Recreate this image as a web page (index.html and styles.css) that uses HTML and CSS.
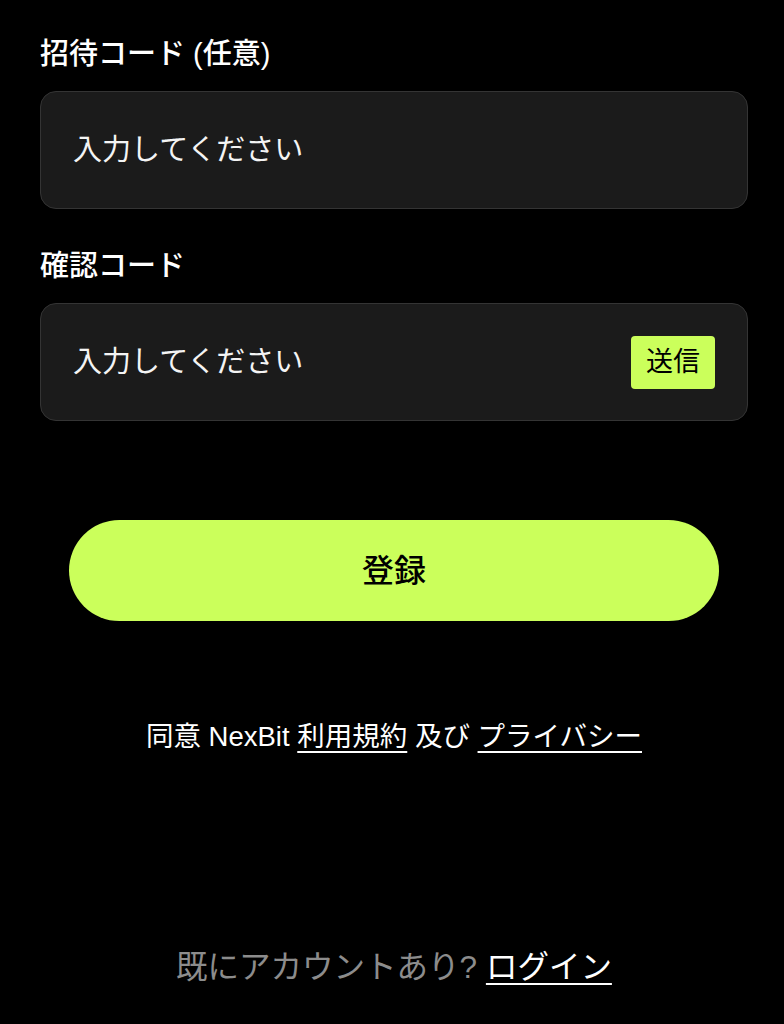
FILE: index.html
```html
<!DOCTYPE html>
<html lang="ja">
<head>
<meta charset="utf-8">
<title>登録</title>
<link rel="stylesheet" href="styles.css">
</head>
<body>
<main class="page">
  <form class="form">
    <div class="fields">
      <div class="field">
        <label class="label">招待コード (任意)</label>
        <div class="input">
          <span class="placeholder">入力してください</span>
        </div>
      </div>
      <div class="field">
        <label class="label">確認コード</label>
        <div class="input">
          <span class="placeholder">入力してください</span>
          <span class="send">送信</span>
        </div>
      </div>
    </div>
    <div class="submit-wrap">
      <button type="button" class="submit">登録</button>
    </div>
    <p class="agree">同意 NexBit <a class="link">利用規約</a> 及び <a class="link">プライバシー</a></p>
    <p class="login"><span class="muted">既にアカウントあり?</span> <a class="link">ログイン</a></p>
  </form>
</main>
</body>
</html>
```
FILE: styles.css
```css
html, body {
  margin: 0;
  padding: 0;
  background: #000;
}
body {
  font-family: "Liberation Sans", "Noto Sans CJK JP", sans-serif;
  color: #fff;
  width: 784px;
  height: 1024px;
  overflow: hidden;
}
.page {
  padding: 34px 36px 0 40px;
}
.form {
  display: flex;
  flex-direction: column;
}
.fields {
  display: flex;
  flex-direction: column;
  gap: 37px;
}
.field {
  display: flex;
  flex-direction: column;
  gap: 17px;
}
.label {
  font-size: 29px;
  line-height: 40px;
  font-weight: 500;
}
.input {
  box-sizing: border-box;
  height: 118px;
  border: 1px solid #343434;
  border-radius: 16px;
  background: #1b1b1b;
  display: flex;
  align-items: center;
  justify-content: space-between;
  padding: 0 32px;
}
.placeholder {
  font-size: 29px;
  line-height: 40px;
  color: #f4f4f4;
}
.send {
  background: #cbff5b;
  color: #000;
  font-size: 27px;
  line-height: 53px;
  padding: 0 15px;
  border-radius: 4px;
}
.submit-wrap {
  padding: 99px 29px 0;
}
.submit {
  display: block;
  width: 100%;
  height: 101px;
  padding: 0 0 6px;
  border: none;
  border-radius: 51px;
  background: #cbff5b;
  color: #000;
  font-family: "Liberation Sans", "Noto Sans CJK JP", sans-serif;
  font-size: 32px;
  font-weight: 500;
}
.agree {
  margin: 96px 0 0;
  text-align: center;
  font-size: 27.5px;
  line-height: 40px;
}
.link {
  color: #fff;
  text-decoration: underline;
  text-underline-offset: 5px;
  text-decoration-thickness: 2px;
}
.login {
  margin: 190px 0 0;
  text-align: center;
  font-size: 31.5px;
  line-height: 40px;
}
.muted {
  color: #8c8c8c;
}
```
